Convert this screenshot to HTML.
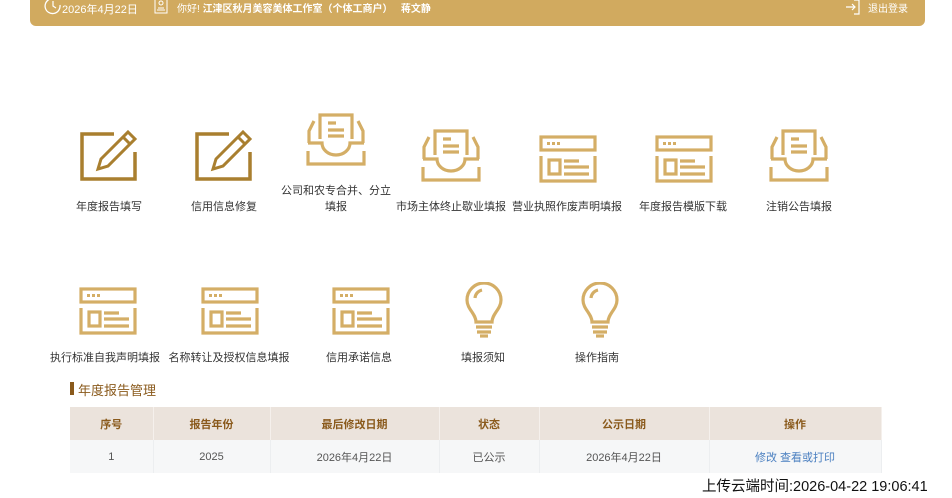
<!DOCTYPE html>
<html><head><meta charset="utf-8"><style>
body{margin:0;width:952px;height:498px;background:#fff;position:relative;overflow:hidden;font-family:"Liberation Sans","Noto Sans CJK SC",sans-serif;}
.hdr{position:absolute;left:30px;top:0;width:895px;height:26px;background:#d1aa5f;border-radius:0 0 6px 6px;color:#fff;font-size:11px;}
.ab{position:absolute;}
.lbl{position:absolute;font-size:11px;color:#333;text-align:center;width:130px;line-height:16px;white-space:nowrap;}
svg{position:absolute;}
table{position:absolute;left:70px;top:407px;width:811px;border-collapse:collapse;font-size:11px;text-align:center;table-layout:fixed;}
th{background:#ebe3dc;color:#8a5a1c;height:33px;padding:0;border-right:1px solid #f5f0ec;font-weight:bold;}
td{background:#f6f7f8;color:#555;height:33px;padding:0;border-right:1px solid #eceef0;}
</style></head><body>
<div class="hdr">
<svg style="left:14px;top:-3px" width="18" height="18" viewBox="0 0 18 18"><path d="M6 2 A7.5 7.5 0 1 0 16 8" fill="none" stroke="#fff" stroke-width="1.3"/><path d="M9 4 V9 L12 11" fill="none" stroke="#fff" stroke-width="1.2"/></svg>
<span class="ab" style="left:32px;top:1px;font-size:11px">2026年4月22日</span>
<svg style="left:124px;top:-2px" width="14" height="16" viewBox="0 0 14 16"><rect x="1" y="1" width="12" height="14" fill="none" stroke="#fff" stroke-width="1"/><circle cx="7" cy="5" r="2" fill="none" stroke="#fff"/><path d="M3 12h8M4 10h6" stroke="#fff"/></svg>
<span class="ab" style="left:147px;top:0px;font-size:10px">你好! <b>江津区秋月美容美体工作室（个体工商户）&nbsp;&nbsp;&nbsp;蒋文静</b></span>
<svg style="left:815px;top:-1px" width="16" height="16" viewBox="0 0 16 16"><path d="M9 1h5v14H9M1 8h9M7 5l3 3-3 3" fill="none" stroke="#fff" stroke-width="1.2"/></svg>
<span class="ab" style="left:838px;top:0px;font-size:10px">退出登录</span>
</div>

<svg style="left:80px;top:128px" width="58" height="54" viewBox="0 0 58 54"><path d="M34 6H2V51H55V24" fill="none" stroke="#a97f2f" stroke-width="3.5"/><path d="M48 4l7 7L28 38l-10 3 3-10z" fill="none" stroke="#a97f2f" stroke-width="3"/><path d="M43 9l7 7" stroke="#a97f2f" stroke-width="3"/></svg>
<svg style="left:195px;top:128px" width="58" height="54" viewBox="0 0 58 54"><path d="M34 6H2V51H55V24" fill="none" stroke="#a97f2f" stroke-width="3.5"/><path d="M48 4l7 7L28 38l-10 3 3-10z" fill="none" stroke="#a97f2f" stroke-width="3"/><path d="M43 9l7 7" stroke="#a97f2f" stroke-width="3"/></svg>
<div class="lbl" style="left:44px;top:199px">年度报告填写</div>
<div class="lbl" style="left:159px;top:199px">信用信息修复</div>

<svg style="left:306px;top:113px" width="60" height="53" viewBox="0 0 60 53"><g fill="none" stroke="#d4ae66" stroke-width="3.2"><path d="M14 26V2H46V26"/><path d="M22 10h8M22 17h16M22 23h16"/><path d="M8 8L3 18V30"/><path d="M52 8L57 18V30"/><path d="M2 30h14a14 12 0 0 0 28 0h14"/><path d="M2 38V51H58V38"/></g></svg>
<svg style="left:421px;top:129px" width="60" height="53" viewBox="0 0 60 53"><g fill="none" stroke="#d4ae66" stroke-width="3.2"><path d="M14 26V2H46V26"/><path d="M22 10h8M22 17h16M22 23h16"/><path d="M8 8L3 18V30"/><path d="M52 8L57 18V30"/><path d="M2 30h14a14 12 0 0 0 28 0h14"/><path d="M2 38V51H58V38"/></g></svg>
<svg style="left:769px;top:129px" width="60" height="53" viewBox="0 0 60 53"><g fill="none" stroke="#d4ae66" stroke-width="3.2"><path d="M14 26V2H46V26"/><path d="M22 10h8M22 17h16M22 23h16"/><path d="M8 8L3 18V30"/><path d="M52 8L57 18V30"/><path d="M2 30h14a14 12 0 0 0 28 0h14"/><path d="M2 38V51H58V38"/></g></svg>
<div class="lbl" style="left:271px;top:183px">公司和农专合并、分立<br>填报</div>
<div class="lbl" style="left:386px;top:199px">市场主体终止歇业填报</div>
<div class="lbl" style="left:734px;top:199px">注销公告填报</div>

<svg style="left:539px;top:135px" width="58" height="48" viewBox="0 0 58 48"><g fill="none" stroke="#d4ae66" stroke-width="3.2"><rect x="2" y="2" width="54" height="13"/><path d="M2 21V46H56V21"/><rect x="10" y="25" width="11" height="14"/><path d="M25 26h15M25 32h25M25 39h25"/></g><g fill="#d4ae66"><rect x="8" y="7" width="3" height="3"/><rect x="13" y="7" width="3" height="3"/><rect x="18" y="7" width="3" height="3"/></g></svg>
<svg style="left:655px;top:135px" width="58" height="48" viewBox="0 0 58 48"><g fill="none" stroke="#d4ae66" stroke-width="3.2"><rect x="2" y="2" width="54" height="13"/><path d="M2 21V46H56V21"/><rect x="10" y="25" width="11" height="14"/><path d="M25 26h15M25 32h25M25 39h25"/></g><g fill="#d4ae66"><rect x="8" y="7" width="3" height="3"/><rect x="13" y="7" width="3" height="3"/><rect x="18" y="7" width="3" height="3"/></g></svg>
<div class="lbl" style="left:502px;top:199px">营业执照作废声明填报</div>
<div class="lbl" style="left:618px;top:199px">年度报告模版下载</div>

<svg style="left:79px;top:287px" width="58" height="48" viewBox="0 0 58 48"><g fill="none" stroke="#d4ae66" stroke-width="3.2"><rect x="2" y="2" width="54" height="13"/><path d="M2 21V46H56V21"/><rect x="10" y="25" width="11" height="14"/><path d="M25 26h15M25 32h25M25 39h25"/></g><g fill="#d4ae66"><rect x="8" y="7" width="3" height="3"/><rect x="13" y="7" width="3" height="3"/><rect x="18" y="7" width="3" height="3"/></g></svg>
<svg style="left:201px;top:287px" width="58" height="48" viewBox="0 0 58 48"><g fill="none" stroke="#d4ae66" stroke-width="3.2"><rect x="2" y="2" width="54" height="13"/><path d="M2 21V46H56V21"/><rect x="10" y="25" width="11" height="14"/><path d="M25 26h15M25 32h25M25 39h25"/></g><g fill="#d4ae66"><rect x="8" y="7" width="3" height="3"/><rect x="13" y="7" width="3" height="3"/><rect x="18" y="7" width="3" height="3"/></g></svg>
<svg style="left:332px;top:287px" width="58" height="48" viewBox="0 0 58 48"><g fill="none" stroke="#d4ae66" stroke-width="3.2"><rect x="2" y="2" width="54" height="13"/><path d="M2 21V46H56V21"/><rect x="10" y="25" width="11" height="14"/><path d="M25 26h15M25 32h25M25 39h25"/></g><g fill="#d4ae66"><rect x="8" y="7" width="3" height="3"/><rect x="13" y="7" width="3" height="3"/><rect x="18" y="7" width="3" height="3"/></g></svg>

<svg style="left:464px;top:282px" width="40" height="58" viewBox="0 0 40 58"><g fill="none" stroke="#d4ae66" stroke-width="3.2"><path d="M12 40C12 32 3 27 3 18A17 17 0 0 1 37 18C37 27 28 32 28 40Z"/><path d="M11 16a9 9 0 0 1 7-8"/><path d="M12 45h16M13 50h14"/><path d="M16 54h8"/></g></svg>
<svg style="left:580px;top:282px" width="40" height="58" viewBox="0 0 40 58"><g fill="none" stroke="#d4ae66" stroke-width="3.2"><path d="M12 40C12 32 3 27 3 18A17 17 0 0 1 37 18C37 27 28 32 28 40Z"/><path d="M11 16a9 9 0 0 1 7-8"/><path d="M12 45h16M13 50h14"/><path d="M16 54h8"/></g></svg>

<div class="lbl" style="left:40px;top:350px">执行标准自我声明填报</div>
<div class="lbl" style="left:164px;top:350px">名称转让及授权信息填报</div>
<div class="lbl" style="left:294px;top:350px">信用承诺信息</div>
<div class="lbl" style="left:418px;top:350px">填报须知</div>
<div class="lbl" style="left:532px;top:350px">操作指南</div>

<div class="ab" style="left:70px;top:382px;width:4px;height:13px;background:#8a5a1c"></div>
<div class="ab" style="left:78px;top:380px;font-size:13px;color:#8a5a1c">年度报告管理</div>

<table>
<colgroup><col style="width:83px"><col style="width:117px"><col style="width:169px"><col style="width:100px"><col style="width:170px"><col style="width:172px"></colgroup>
<tr><th>序号</th><th>报告年份</th><th>最后修改日期</th><th>状态</th><th>公示日期</th><th>操作</th></tr>
<tr><td>1</td><td>2025</td><td>2026年4月22日</td><td>已公示</td><td>2026年4月22日</td><td style="color:#4a7fc0">修改 查看或打印</td></tr>
</table>
<div class="ab" style="left:702px;top:475px;font-size:14.5px;color:#111">上传云端时间:2026-04-22 19:06:41</div>
</body></html>
